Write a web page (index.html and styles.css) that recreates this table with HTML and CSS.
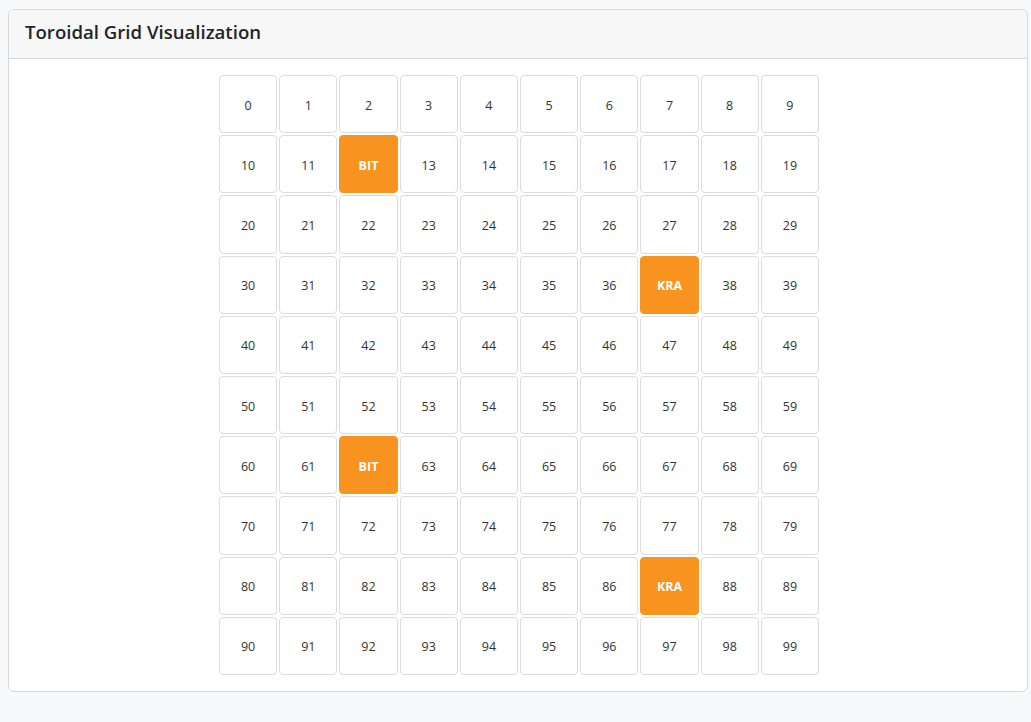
FILE: index.html
```html
<!DOCTYPE html>
<html>
<head>
<meta charset="utf-8">
<link rel="stylesheet" href="styles.css">
</head>
<body>
<div class="page">
  <div class="card">
    <div class="card-header"><h5 class="title">Toroidal Grid Visualization</h5></div>
    <div class="card-body">
      <div class="grid" id="grid"></div>
    </div>
  </div>
</div>
<script>
var special = {12: "BIT", 37: "KRA", 62: "BIT", 87: "KRA"};
var g = document.getElementById("grid");
for (var i = 0; i < 100; i++) {
  var d = document.createElement("div");
  d.className = "cell" + (special[i] ? " agent" : "");
  d.textContent = special[i] || String(i);
  g.appendChild(d);
}
</script>
</body>
</html>
```
FILE: styles.css
```css
html, body { margin: 0; padding: 0; background: #f8f9fa; }
body { font-family: "Open Sans", "Noto Sans", sans-serif; color: #212529; }
.page { padding: 9px 3px 0 8px; }
.card {
  width: 1020px;
  box-sizing: border-box;
  background: #fff;
  border: 1px solid #d6d8db;
  border-radius: 6px;
  overflow: hidden;
}
.card-header {
  background: #f7f7f7;
  border-bottom: 1px solid #d6d8db;
  height: 48px;
  box-sizing: content-box;
  display: flex;
  align-items: center;
  padding: 0 16px;
}
.title { margin: 0 0 4px; font-size: 18.6px; font-weight: 600; color: #212529; line-height: 1.2; }
.card-body { padding: 16px 0 16px; display: flex; justify-content: center; }
.grid {
  width: 600px;
  display: grid;
  grid-template-columns: repeat(10, 1fr);
  grid-auto-rows: 58.2px;
  gap: 2px;
  margin-left: 2px;
}
.cell {
  box-sizing: border-box;
  border: 1px solid #dcdcdc;
  border-radius: 4px;
  display: flex;
  align-items: center;
  justify-content: center;
  padding-top: 2px;
  font-size: 12.5px;
  color: #333;
  background: #fff;
}
.cell.agent {
  background: #f7931e;
  border-color: #f7931e;
  color: #fff;
  font-weight: 700;
}
```
